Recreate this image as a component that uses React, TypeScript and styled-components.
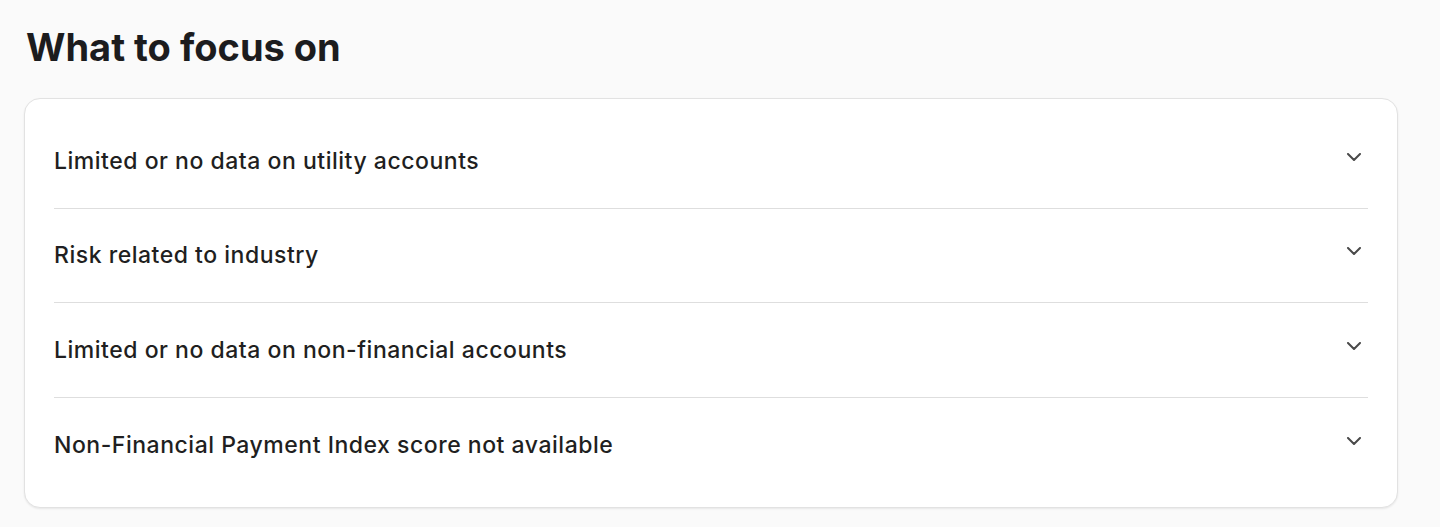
import React from "react";
import styled, { createGlobalStyle } from "styled-components";

const Global = createGlobalStyle`
  html, body { margin: 0; padding: 0; background: #fafafa; }
  body { font-family: Inter, "Noto Sans", sans-serif; color: #1c1c1e; -webkit-font-smoothing: antialiased; }
`;

const Page = styled.div`
  padding: 22px 42px 20px 24px;
`;

const Title = styled.h2`
  margin: 0 0 26px 2px;
  font-size: 38px;
  line-height: 50px;
  font-weight: 700;
  letter-spacing: 0;
  color: #1c1c1e;
`;

const Card = styled.div`
  background: #fff;
  border: 1px solid #e2e2e2;
  border-radius: 16px;
  box-shadow: 0 1px 2px rgba(0, 0, 0, 0.08);
  padding: 15px 29px 15px;
`;

const Row = styled.div<{ $last?: boolean }>`
  display: flex;
  align-items: center;
  justify-content: space-between;
  height: 94.6px;
  border-bottom: ${(p) => (p.$last ? "none" : "1px solid #dedede")};
  box-sizing: border-box;
`;

const Label = styled.span`
  font-size: 23px;
  font-weight: 500;
  color: #1f1f21;
  letter-spacing: 0.52px;
`;

const Chevron = styled.svg`
  width: 16px;
  height: 8px;
  margin-right: 6px;
  margin-top: -8px;
  flex-shrink: 0;
`;

const items = [
  "Limited or no data on utility accounts",
  "Risk related to industry",
  "Limited or no data on non-financial accounts",
  "Non-Financial Payment Index score not available",
];

export default function App() {
  return (
    <>
      <Global />
      <Page>
        <Title>What to focus on</Title>
        <Card>
          {items.map((t, i) => (
            <Row key={t} $last={i === items.length - 1}>
              <Label>{t}</Label>
              <Chevron viewBox="0 0 16 8" fill="none">
                <polyline points="2,1 8,7 14,1" stroke="#4a4a4a" strokeWidth="2" strokeLinecap="round" strokeLinejoin="round" />
              </Chevron>
            </Row>
          ))}
        </Card>
      </Page>
    </>
  );
}
